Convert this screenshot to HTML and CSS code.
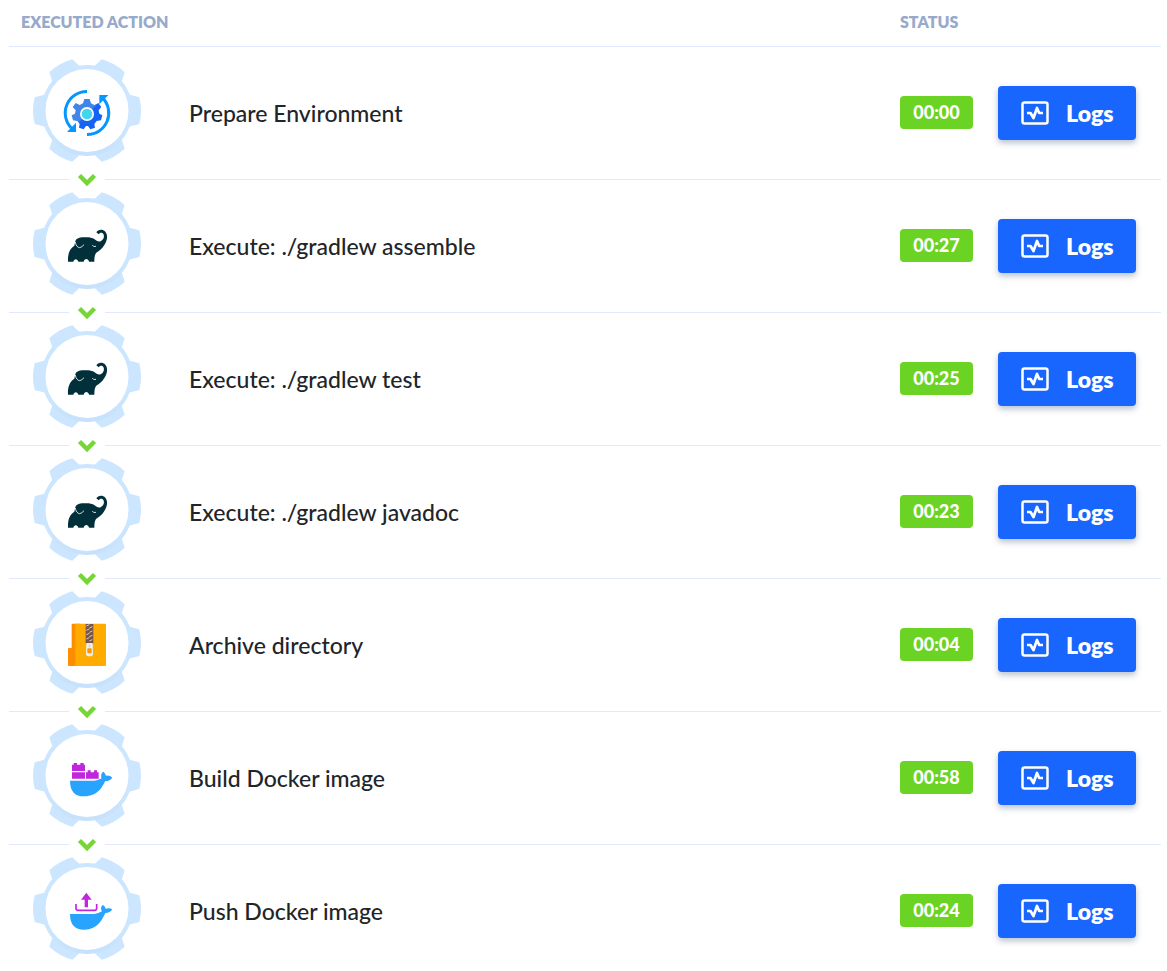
FILE: index.html
```html
<!DOCTYPE html>
<html lang="en">
<head>
<meta charset="utf-8">
<meta name="viewport" content="width=device-width, initial-scale=1">
<title>Executed actions</title>
<link rel="stylesheet" href="styles.css">
</head>
<body>
<svg class="sprite" aria-hidden="true">
  <defs>
    <linearGradient id="cog-fill" x1="0" y1="0" x2="1" y2="1">
      <stop offset="0.48" stop-color="#4285ea"/>
      <stop offset="0.52" stop-color="#1463f3"/>
    </linearGradient>
    <linearGradient id="rim-shade" x1="0" y1="0" x2="0" y2="1">
      <stop offset="0.7" stop-color="#cce6ff"/>
      <stop offset="1" stop-color="#c6e1fb"/>
    </linearGradient>
    <symbol id="badge" viewBox="27 47 120 118">
      <g fill="#cce6ff">
        <g id="teeth">
          <path d="M72.300 59.300A54 54 0 0 0 49.300 72.200L52.300 81.500L66 76L79.500 66Z"/>
          <path d="M72.300 161.700A54 54 0 0 1 49.300 148.800L52.300 139.500L66 145L79.500 155Z"/>
          <path d="M34.700 97.300A54 54 0 0 0 34.700 124L45 126.700V94.600Z"/>
        </g>
        <use href="#teeth" transform="translate(174 0) scale(-1 1)"/>
      </g>
      <circle cx="87" cy="110.500" r="45.500" fill="url(#rim-shade)"/>
      <circle cx="87" cy="110.500" r="41.500" fill="#fff"/>
    </symbol>
    <symbol id="environment" viewBox="0 0 162 162">
      <g fill="none" stroke="#0597ff" stroke-width="9">
        <path d="M81 19.500A64.500 64.500 0 0 0 35 130"/>
        <path d="M81 148.500A64.500 64.500 0 0 0 127 38"/>
      </g>
      <path d="M48 113V141H21ZM118 58V30H145Z" fill="#0597ff"/>
      <path fill="url(#cog-fill)" d="M73 42H89L93 55L103 60L115 54L124 66L116 76L118 86L127 91L123 106L110 108L103 117L105 128L91 133L84 123H78L71 133L57 128L59 117L52 108L39 106L35 91L45 86L47 76L38 66L47 54L59 60L69 55Z"/>
      <circle cx="81" cy="87" r="21" fill="#fff"/>
      <circle cx="81" cy="87" r="16" fill="#43d5ee"/>
    </symbol>
    <symbol id="gradle" viewBox="0 0 162 135">
      <path fill="#02303a" d="M24 110C23 88 28 71 43 62L46 49C49 40 58 37 70 37C84 36 96 37 103 42C110 48 116 52 123 48C131 44 134 34 130 27C127 21 119 22 116 28L109 22C114 13 128 12 136 20C146 32 140 50 133 60C127 71 118 77 108 84C104 90 103 98 103 110H87C85 99 73 99 71 110H55C53 100 42 100 40 110Z"/>
      <path fill="none" stroke="#fff" stroke-width="2.500" d="M46 51C47 61 53 68 59 68Q65 67 72 59M97 60Q100 67 108 64"/>
    </symbol>
    <symbol id="archive" viewBox="0 0 162 162">
      <path fill="#ff8d00" d="M37 20H60V147H27Q24 147 24 144V96Q24 93 27 93H35V22Q35 20 37 20Z"/>
      <path fill="#ffab00" d="M46 20H135Q138 20 138 23V144Q138 147 135 147H42Q46 147 46 142Z"/>
      <path fill="#795548" d="M77 21H100V80H77Z"/>
      <path fill="none" stroke="#d5ccca" stroke-width="3" d="M79 27L88 23M88 33L97 29M79 40L88 36M88 46L97 42M79 53L88 49M88 59L97 55M79 66L88 62M88 72L97 68"/>
      <path fill="#eceff1" d="M79 78H98L99 111Q99 118 92 118H85Q78 118 78 111Z"/>
      <rect x="82" y="94" width="13" height="15" rx="3" fill="#ff9800"/>
      <path d="M86 82H91V91H86Z" fill="#cfd8dc"/>
    </symbol>
    <symbol id="whale" viewBox="0 0 180 150">
      <path fill="#28a4ff" d="M30 87H103Q112 87 126 79C120 70 125 61 129 60Q135 64 137 71Q148 67 157 73Q151 84 136 84C128 99 116 134 72 134Q30 134 30 87Z"/>
    </symbol>
    <symbol id="bricks" viewBox="0 0 180 150">
      <path fill="#28a4ff" d="M30 77H103Q112 77 125 70C121 60 126 52 130 50Q136 54 138 62Q149 60 157 68Q150 78 136 78C128 92 116 124 72 124Q30 124 30 77Z"/>
      <path fill="#c026dc" d="M36 29H41V24H51V29H61V24H71V29H75V48H36ZM36 52H75V71H36ZM78 52H83V46H92V52H102V46H111V52H116V71H78Z"/>
    </symbol>
    <symbol id="upload" viewBox="0 0 180 150">
      <use href="#whale"/>
      <path fill="#c026dc" d="M79 23L95 44H84V67H74V44H63Z"/>
      <path fill="none" stroke="#c026dc" stroke-width="5" d="M48 57V70Q48 76 54 76H104Q110 76 110 70V57"/>
    </symbol>
    <symbol id="logs" viewBox="0 0 28 24">
      <rect x="1.500" y="1.500" width="25" height="21" rx="2" fill="none" stroke="#fff" stroke-width="2.500"/>
      <path d="M6 12H9.500L12.500 17L16 7L18.200 12H22" fill="none" stroke="#fff" stroke-width="2.700" stroke-linejoin="round"/>
    </symbol>
    <symbol id="chevron" viewBox="0 0 36 14">
      <path d="M10.500 2.500L18 10L25.500 2.500" fill="none" stroke="#76d636" stroke-width="4.500"/>
    </symbol>
  </defs>
</svg>
<table class="actions">
  <colgroup><col class="col-icon"><col><col class="col-time"><col class="col-logs"></colgroup>
  <thead>
    <tr><th class="head head-action" colspan="2" scope="col">EXECUTED ACTION</th><th class="head" colspan="2" scope="col">STATUS</th></tr>
  </thead>
  <tbody>
    <tr class="action">
      <td class="cell cell-icon"><div class="step"><svg class="badge"><use href="#badge"/></svg><svg class="icon icon-environment"><use href="#environment"/></svg></div><svg class="chevron"><use href="#chevron"/></svg></td>
      <td class="cell cell-name">Prepare Environment</td>
      <td class="cell cell-time"><span class="time">00:00</span></td>
      <td class="cell cell-logs"><button class="logs" type="button"><svg class="logs-icon"><use href="#logs"/></svg>Logs</button></td>
    </tr>
    <tr class="action">
      <td class="cell cell-icon"><div class="step"><svg class="badge"><use href="#badge"/></svg><svg class="icon icon-gradle"><use href="#gradle"/></svg></div><svg class="chevron"><use href="#chevron"/></svg></td>
      <td class="cell cell-name">Execute: ./gradlew assemble</td>
      <td class="cell cell-time"><span class="time">00:27</span></td>
      <td class="cell cell-logs"><button class="logs" type="button"><svg class="logs-icon"><use href="#logs"/></svg>Logs</button></td>
    </tr>
    <tr class="action">
      <td class="cell cell-icon"><div class="step"><svg class="badge"><use href="#badge"/></svg><svg class="icon icon-gradle"><use href="#gradle"/></svg></div><svg class="chevron"><use href="#chevron"/></svg></td>
      <td class="cell cell-name">Execute: ./gradlew test</td>
      <td class="cell cell-time"><span class="time">00:25</span></td>
      <td class="cell cell-logs"><button class="logs" type="button"><svg class="logs-icon"><use href="#logs"/></svg>Logs</button></td>
    </tr>
    <tr class="action">
      <td class="cell cell-icon"><div class="step"><svg class="badge"><use href="#badge"/></svg><svg class="icon icon-gradle"><use href="#gradle"/></svg></div><svg class="chevron"><use href="#chevron"/></svg></td>
      <td class="cell cell-name">Execute: ./gradlew javadoc</td>
      <td class="cell cell-time"><span class="time">00:23</span></td>
      <td class="cell cell-logs"><button class="logs" type="button"><svg class="logs-icon"><use href="#logs"/></svg>Logs</button></td>
    </tr>
    <tr class="action">
      <td class="cell cell-icon"><div class="step"><svg class="badge"><use href="#badge"/></svg><svg class="icon icon-archive"><use href="#archive"/></svg></div><svg class="chevron"><use href="#chevron"/></svg></td>
      <td class="cell cell-name">Archive directory</td>
      <td class="cell cell-time"><span class="time">00:04</span></td>
      <td class="cell cell-logs"><button class="logs" type="button"><svg class="logs-icon"><use href="#logs"/></svg>Logs</button></td>
    </tr>
    <tr class="action">
      <td class="cell cell-icon"><div class="step"><svg class="badge"><use href="#badge"/></svg><svg class="icon icon-bricks"><use href="#bricks"/></svg></div><svg class="chevron"><use href="#chevron"/></svg></td>
      <td class="cell cell-name">Build Docker image</td>
      <td class="cell cell-time"><span class="time">00:58</span></td>
      <td class="cell cell-logs"><button class="logs" type="button"><svg class="logs-icon"><use href="#logs"/></svg>Logs</button></td>
    </tr>
    <tr class="action">
      <td class="cell cell-icon"><div class="step"><svg class="badge"><use href="#badge"/></svg><svg class="icon icon-upload"><use href="#upload"/></svg></div></td>
      <td class="cell cell-name">Push Docker image</td>
      <td class="cell cell-time"><span class="time">00:24</span></td>
      <td class="cell cell-logs"><button class="logs" type="button"><svg class="logs-icon"><use href="#logs"/></svg>Logs</button></td>
    </tr>
  </tbody>
</table>
</body>
</html>
```
FILE: styles.css
```css
* { box-sizing: border-box; }

body {
  margin: 0;
  padding: 0 6px 0 9px;
  background: #fff;
  color: #212529;
  font-family: Lato, "Liberation Sans", sans-serif;
}

.sprite { position: absolute; width: 0; height: 0; }

.actions { width: 100%; border-collapse: separate; border-spacing: 0; table-layout: fixed; }
.col-icon { width: 180px; }
.col-time { width: 98px; }
.col-logs { width: 163px; }

.head {
  height: 47px;
  padding: 0 0 2px;
  border-bottom: 1px solid #e0eaff;
  color: #97aacb;
  font-size: 16px;
  font-weight: 800;
  line-height: 20px;
  text-align: left;
}
.head-action { padding-left: 12px; }

.cell { padding: 0 0 14px; border-bottom: 1px solid #e0eaff; vertical-align: top; }
.action:last-child .cell { padding-bottom: 7px; border-bottom: 0; }

.cell-icon { position: relative; padding-left: 18px; }
.step { position: relative; width: 120px; height: 118px; }
.badge { display: block; width: 120px; height: 118px; }

/* Icons lie over the gear, each on its own artboard. */
.icon { position: absolute; left: 33px; width: 54px; height: 54px; }
.icon-environment, .icon-archive { top: 38px; }
.icon-gradle { top: 45px; height: 45px; }
.icon-bricks { top: 43px; width: 60px; height: 50px; }
.icon-upload { top: 40px; width: 60px; height: 50px; }

.chevron {
  position: absolute;
  z-index: 1;
  left: 60px;
  bottom: -8px;
  width: 36px;
  height: 14px;
  background: #fff;
}

.action .cell-name { padding-top: 52px; font-size: 23px; font-weight: 500; line-height: 28px; }

.action .cell-time { padding-top: 49px; }
.time {
  display: block;
  width: 73px;
  border-radius: 4px;
  background: #6bd323;
  color: #fff;
  font-size: 18px;
  font-weight: 900;
  line-height: 33px;
  text-align: center;
}

.action .cell-logs { padding-top: 39px; padding-right: 25px; }
.logs {
  display: flex;
  align-items: center;
  gap: 17px;
  width: 100%;
  height: 54px;
  padding: 0 23px 1px;
  border: 0;
  border-radius: 4px;
  background: #1966ff;
  box-shadow: 0 3px 6px rgba(20, 50, 90, 0.3);
  color: #fff;
  font-family: inherit;
  font-size: 23px;
  font-weight: 800;
  cursor: pointer;
}
.logs-icon { flex: none; width: 28px; height: 24px; }
```
